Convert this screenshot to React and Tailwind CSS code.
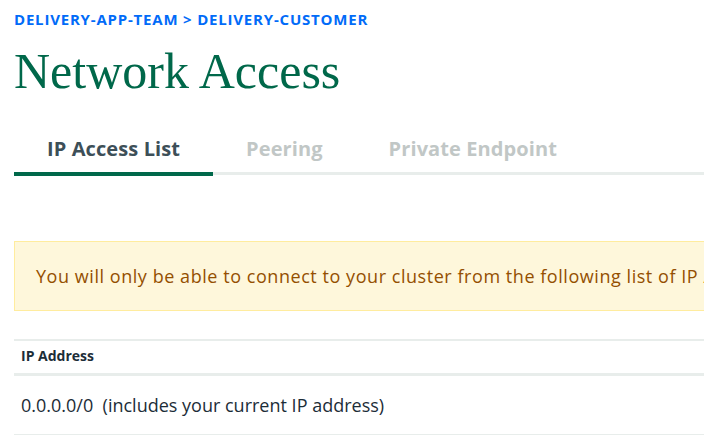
import React, { useState } from "react";

const tabs = ["IP Access List", "Peering", "Private Endpoint"];

const entries = [{ ip: "0.0.0.0/0", note: "(includes your current IP address)" }];

export default function App() {
  const [active, setActive] = useState(0);

  return (
    <div
      className="w-full h-[445px] overflow-hidden bg-white pl-[14px]"
      style={{ fontFamily: "'Open Sans', Lato, sans-serif" }}
    >
      <div className="w-[1000px]">
        {/* --- BREADCRUMB --- */}
        <div className="pt-[10px] text-[15px] leading-[18px] font-bold uppercase tracking-[0.8px] text-[#016BF8]">
          Delivery-App-Team &gt; Delivery-Customer
        </div>

        {/* --- TITLE --- */}
        <h1
          className="mt-[15px] text-[50px] leading-[56px] text-[#00684A]"
          style={{ fontFamily: "'Liberation Serif', serif" }}
        >
          Network Access
        </h1>

        {/* --- TABS --- */}
        <div className="mt-[38px] flex border-b-[3px] border-[#E8EDEB]">
          {tabs.map((tab, i) => (
            <button
              key={tab}
              onClick={() => setActive(i)}
              className={`relative px-[33px] pb-[11px] text-[20px] leading-[24px] font-bold tracking-[0.1px] ${
                i === active ? "text-[#3D4F58]" : "text-[#C1C7C6]"
              }`}
            >
              {tab}
              {i === active && (
                <span className="absolute left-0 right-0 -bottom-[4px] h-[4px] bg-[#00684A]" />
              )}
            </button>
          ))}
        </div>

        {/* --- BANNER --- */}
        <div className="mt-[66px] h-[70px] flex items-center border border-[#FFEC9E] bg-[#FEF7DB] px-[21px] text-[18px] tracking-[0.55px] text-[#944F01] whitespace-nowrap">
          You will only be able to connect to your cluster from the following list of IP Addresses:
        </div>

        {/* --- TABLE --- */}
        <div className="mt-[28px] border-t-2 border-[#E8EDEB]">
          <div className="h-[35px] flex items-center px-[7px] pb-[3px] border-b-[3px] border-[#E8EDEB] text-[14px] font-bold text-[#1C2D38]">
            IP Address
          </div>
          {entries.map((e) => (
            <div
              key={e.ip}
              className="h-[59px] flex items-center px-[7px] border-b border-[#E8EDEB] text-[18px] text-[#1C2D38]"
            >
              {e.ip}&nbsp; {e.note}
            </div>
          ))}
        </div>
      </div>
    </div>
  );
}
